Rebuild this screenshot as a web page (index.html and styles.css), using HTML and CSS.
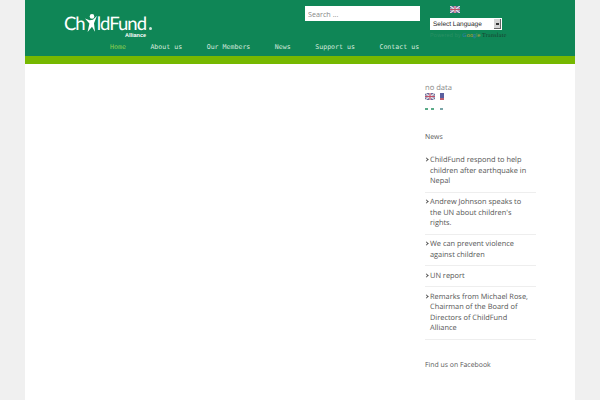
FILE: index.html
```html
<!DOCTYPE html>
<html lang="en">
  <head>
    <meta charset="UTF-8" />
    <title>ChildFund Alliance</title>
    <link rel="stylesheet" href="styles.css">
  </head>
  <body>
    <div class="page">
      <header class="header">
        <div class="header-top">
          <a href="#" class="logo">
            <span class="logo-name">Ch<svg class="logo-kid" viewBox="0 0 12 18"><circle cx="7" cy="2.4" r="2.3" fill="#fff"/><path d="M0 4.6 L4.6 6.2 L8 5.8 L12 1.8 L9 9.2 L10 17.8 L7 12.8 L2.6 18 L4.4 9.6 Z" fill="#fff"/></svg>ldFund</span>
            <span class="logo-reg"></span>
            <span class="logo-sub">Alliance</span>
          </a>
          <input class="search" type="text" placeholder="Search ..." />
          <div class="lang">
            <svg class="flag flag-top" viewBox="0 0 10 7"><use href="#uk"/></svg>
            <div class="lang-select">Select Language<span class="lang-arrow"></span></div>
            <div class="powered"><span class="pw">Powered by</span> <span class="g1">G</span><span class="g2">o</span><span class="g3">o</span><span class="g1">g</span><span class="g4">l</span><span class="g2">e</span> <span class="tr">Translate</span></div>
          </div>
        </div>
        <nav class="nav">
          <a href="#" class="active">Home</a>
          <a href="#">About us</a>
          <a href="#">Our Members</a>
          <a href="#">News</a>
          <a href="#">Support us</a>
          <a href="#">Contact us</a>
        </nav>
      </header>
      <div class="lime"></div>

      <div class="content">
        <aside class="sidebar">
          <p class="nodata">no data</p>
          <div class="flags">
            <svg class="flag" viewBox="0 0 10 7"><use href="#uk"/></svg>
            <span class="flag-small"></span>
          </div>
          <div class="dashes"><i></i><i></i><i class="last"></i></div>

          <h3 class="side-title">News</h3>
          <ul class="news">
            <li>ChildFund respond to help children after earthquake in Nepal</li>
            <li>Andrew Johnson speaks to the UN about children's rights.</li>
            <li>We can prevent violence against children</li>
            <li>UN report</li>
            <li>Remarks from Michael Rose, Chairman of the Board of Directors of ChildFund Alliance</li>
          </ul>
          <h3 class="side-title fb">Find us on Facebook</h3>
        </aside>
      </div>
    </div>

    <svg class="defs" width="0" height="0">
      <symbol id="uk" viewBox="0 0 10 7">
        <rect width="10" height="7" fill="#5a5f95"/>
        <path d="M0 0 L10 7 M10 0 L0 7" stroke="#e4dfe4" stroke-width="1.4"/>
        <path d="M5 0 V7 M0 3.5 H10" stroke="#e4dfe4" stroke-width="2.2"/>
        <path d="M5 0 V7 M0 3.5 H10" stroke="#c05068" stroke-width="1.1"/>
      </symbol>
    </svg>
  </body>
</html>
```

FILE: styles.css
```css
html,
body {
  margin: 0;
  height: 400px;
  overflow: hidden;
}
body {
  background-color: #f0f0f0;
  font-family: "Open Sans", sans-serif;
  text-rendering: geometricPrecision;
}
.page {
  width: 550px;
  height: 400px;
  margin-left: 25px;
  background-color: #fff;
}
.defs {
  position: absolute;
}

.header {
  height: 56px;
  background-color: #0f8656;
}
.header-top {
  display: flex;
  height: 40px;
}
.logo {
  position: relative;
  width: 94px;
  margin: 13px 0 0 39px;
  color: #fff;
  text-decoration: none;
}
.logo-name {
  display: block;
  font-family: "Lato", sans-serif;
  font-size: 18.5px;
  line-height: 20px;
  letter-spacing: -1px;
  white-space: nowrap;
}
.logo-kid {
  width: 14px;
  height: 18px;
  margin: 0 -1px 0 -1px;
  vertical-align: -2px;
}
.logo-reg {
  position: absolute;
  left: 85px;
  top: 14px;
  width: 3px;
  height: 3px;
  border-radius: 50%;
  background-color: #cfe6da;
}
.logo-sub {
  position: absolute;
  left: 61px;
  top: 20px;
  font-family: "Liberation Sans", sans-serif;
  font-size: 5.5px;
  line-height: 6px;
  font-weight: bold;
}
.search {
  width: 115px;
  height: 15px;
  margin: 6px 0 0 147px;
  padding: 0 3px;
  box-sizing: border-box;
  border: none;
  background-color: #fff;
  font-family: "Open Sans", sans-serif;
  font-size: 7.2px;
}
.search::placeholder {
  color: #888;
}
.lang {
  display: flex;
  flex-direction: column;
  margin: 6px 0 0 10px;
}
.flag {
  display: block;
  width: 10px;
  height: 7px;
}
.flag-top {
  margin-left: 20px;
}
.lang-select {
  display: flex;
  align-items: center;
  justify-content: space-between;
  width: 72px;
  height: 12px;
  margin-top: 5px;
  padding-left: 3px;
  box-sizing: border-box;
  background-color: #fff;
  color: #222;
  font-family: "Liberation Sans", sans-serif;
  font-size: 6.5px;
}
.lang-arrow {
  width: 7px;
  height: 10px;
  margin-right: 1px;
  box-sizing: border-box;
  background: linear-gradient(#333, #333) center / 3px 2px no-repeat #d4d4d4;
  border-right: 1px solid #666;
  border-bottom: 1px solid #666;
}
.powered {
  margin-top: 3px;
  font-family: "Liberation Sans", sans-serif;
  font-size: 5.5px;
  white-space: nowrap;
}
.pw {
  color: #2a9064;
  letter-spacing: 0.2px;
}
.g1 {
  color: #3d7fb8;
}
.g2 {
  color: #b8a040;
}
.g3 {
  color: #c8a020;
}
.g4 {
  color: #5aa060;
}
.tr {
  color: #1c3a2c;
  font-family: "Liberation Serif", serif;
  font-size: 6px;
  letter-spacing: 0.3px;
}

.nav {
  display: flex;
  gap: 24.5px;
  padding-left: 85px;
  font-family: "DejaVu Sans Mono", monospace;
  font-size: 6.6px;
  line-height: 14px;
}
.nav a {
  color: #d5e9df;
  text-decoration: none;
}
.nav a.active {
  color: #8fd14f;
}

.lime {
  height: 8px;
  background-color: #76b800;
}

.content {
  display: flex;
  justify-content: flex-end;
  padding-right: 39px;
}
.sidebar {
  width: 111px;
  color: #555;
  font-size: 7.4px;
  line-height: 10.5px;
}
.nodata {
  margin: 19px 0 0;
  color: #888;
  font-size: 7.6px;
}
.flags {
  display: flex;
  align-items: center;
  gap: 5px;
  margin-top: -1px;
}
.flag-small {
  width: 4px;
  height: 7px;
  background: linear-gradient(#5a5f9f 70%, #c06070 70%);
}
.dashes {
  display: flex;
  gap: 3px;
  margin-top: 8px;
}
.dashes i {
  width: 3px;
  height: 2px;
  background-color: #5aab88;
}
.dashes i.last {
  margin-left: 3px;
  background-color: #7aa5a8;
}
.side-title {
  margin: 23.5px 0 0;
  font-size: 6.9px;
  font-weight: normal;
  line-height: 10px;
  color: #555;
}
.news {
  list-style: none;
  margin: 7.5px 0 0;
  padding: 0;
}
.news li {
  position: relative;
  padding: 4.5px 6px 5px 5px;
  border-bottom: 1px solid #eee;
}
.news li::before {
  content: "";
  position: absolute;
  left: 0;
  top: 7.5px;
  width: 2px;
  height: 2px;
  border-top: 1px solid #555;
  border-right: 1px solid #555;
  transform: rotate(45deg);
}
.side-title.fb {
  margin-top: 21.5px;
}
```
